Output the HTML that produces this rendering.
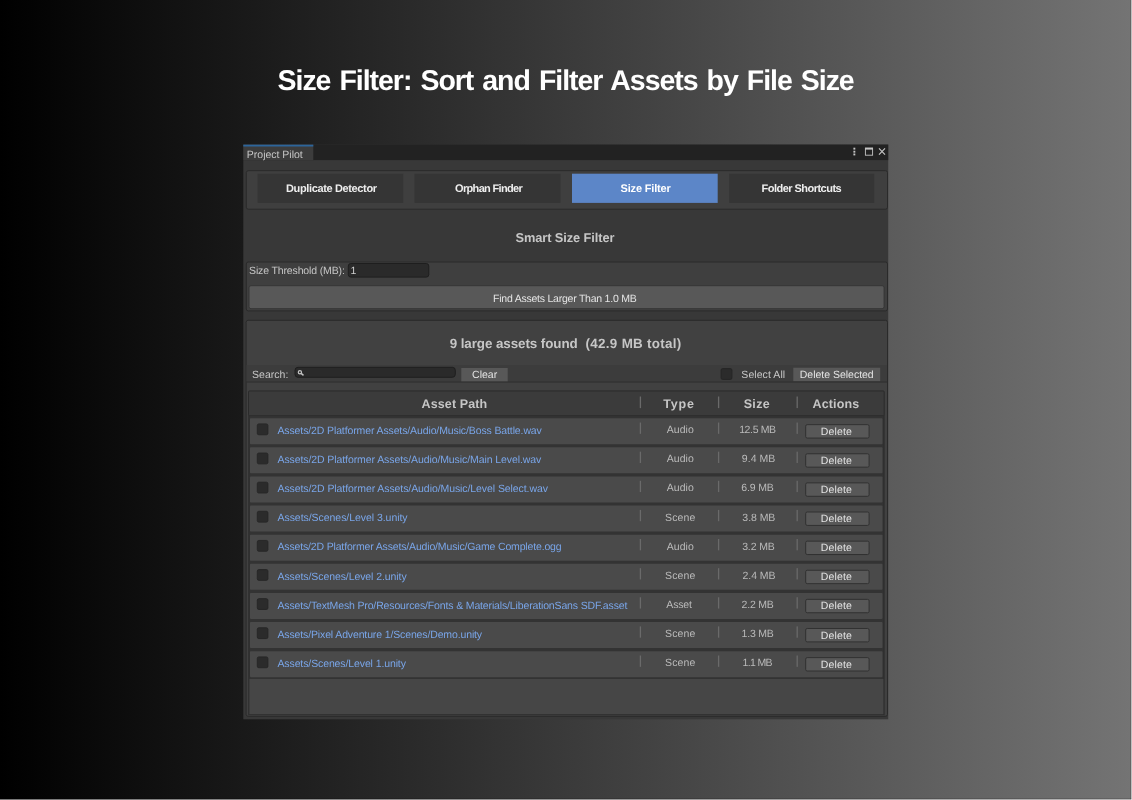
<!DOCTYPE html>
<html lang="en">
<head>
<meta charset="utf-8">
<title>Size Filter: Sort and Filter Assets by File Size</title>
<style>
*{box-sizing:border-box;margin:0;padding:0}
html,body{width:1132px;height:800px;overflow:hidden}
body{position:relative;background:linear-gradient(90deg,#000000 0%,#747474 100%);font-family:"Liberation Sans", sans-serif;color:#c6c6c6;text-rendering:geometricPrecision}
#shapes{position:absolute;left:0;top:0;width:1132px;height:800px}
#ui{position:absolute;left:0;top:0;width:1132px;height:800px;will-change:transform}
.t{position:absolute;white-space:nowrap;font-weight:400;text-decoration:none;display:block}
.pre{white-space:pre}
</style>
</head>
<body>
<svg id="shapes" width="1132" height="800" viewBox="0 0 1132 800" shape-rendering="geometricPrecision">
<rect x="243.30" y="144.60" width="644.90" height="574.70" fill="#383838"/>
<rect x="243.30" y="144.60" width="644.90" height="15.50" fill="#222222"/>
<rect x="243.30" y="144.60" width="70.00" height="15.50" fill="#3c3c3c"/>
<rect x="243.30" y="144.70" width="70.00" height="1.80" fill="#2c659b"/>
<rect x="246.30" y="170.70" width="641.20" height="38.50" fill="#3f3f3f" rx="2" stroke="#2a2a2a" stroke-width="1"/>
<rect x="257.60" y="173.70" width="145.70" height="29.20" fill="#353535"/>
<rect x="414.50" y="173.70" width="146.00" height="29.20" fill="#353535"/>
<rect x="572.00" y="173.70" width="145.70" height="29.20" fill="#5c86c8"/>
<rect x="729.20" y="173.70" width="145.00" height="29.20" fill="#353535"/>
<rect x="246.30" y="262.00" width="641.20" height="48.90" fill="#3f3f3f" rx="2" stroke="#2a2a2a" stroke-width="1"/>
<rect x="348.30" y="263.50" width="80.50" height="13.60" fill="#2a2a2a" rx="2.5" stroke="#1e1e1e" stroke-width="1"/>
<rect x="249.00" y="285.70" width="635.10" height="23.00" fill="#585858" rx="2" stroke="#353535" stroke-width="1"/>
<rect x="246.10" y="320.30" width="641.40" height="396.00" fill="#414141" rx="2" stroke="#2a2a2a" stroke-width="1"/>
<rect x="246.60" y="365.00" width="640.30" height="16.50" fill="#3c3c3c"/>
<rect x="246.60" y="381.50" width="640.30" height="1.00" fill="#2c2c2c"/>
<rect x="295.00" y="367.30" width="160.30" height="10.00" fill="#2a2a2a" rx="3" stroke="#1e1e1e" stroke-width="1"/>
<rect x="461.30" y="368.00" width="46.40" height="13.30" fill="#585858"/>
<rect x="721.10" y="368.60" width="10.80" height="10.80" fill="#2b2b2b" rx="1.5" stroke="#262626" stroke-width="1"/>
<rect x="793.30" y="367.70" width="86.90" height="13.40" fill="#585858"/>
<rect x="248.50" y="390.90" width="635.70" height="24.90" fill="#3b3b3b" rx="1" stroke="#2b2b2b" stroke-width="1"/>
<rect x="248.20" y="415.00" width="636.40" height="300.20" fill="#2e2e2e"/>
<rect x="249.40" y="678.76" width="634.00" height="35.44" fill="#464646"/>
<rect x="249.40" y="416.20" width="634.00" height="262.56" fill="#333333"/>
<rect x="250.00" y="418.25" width="632.50" height="25.95" fill="#4a4a4a" rx="0.8"/>
<rect x="257.30" y="423.95" width="10.60" height="10.80" fill="#2b2b2b" rx="1.5" stroke="#272727" stroke-width="1"/>
<rect x="639.75" y="422.55" width="1.30" height="11.30" fill="#6a6a6a"/>
<rect x="717.95" y="422.55" width="1.30" height="11.30" fill="#6a6a6a"/>
<rect x="796.55" y="422.55" width="1.30" height="11.30" fill="#6a6a6a"/>
<rect x="805.70" y="424.65" width="63.40" height="13.40" fill="#585858" rx="1.5" stroke="#313131" stroke-width="1"/>
<rect x="250.00" y="447.37" width="632.50" height="25.95" fill="#4a4a4a" rx="0.8"/>
<rect x="257.30" y="453.07" width="10.60" height="10.80" fill="#2b2b2b" rx="1.5" stroke="#272727" stroke-width="1"/>
<rect x="639.75" y="451.67" width="1.30" height="11.30" fill="#6a6a6a"/>
<rect x="717.95" y="451.67" width="1.30" height="11.30" fill="#6a6a6a"/>
<rect x="796.55" y="451.67" width="1.30" height="11.30" fill="#6a6a6a"/>
<rect x="805.70" y="453.77" width="63.40" height="13.40" fill="#585858" rx="1.5" stroke="#313131" stroke-width="1"/>
<rect x="250.00" y="476.49" width="632.50" height="25.95" fill="#4a4a4a" rx="0.8"/>
<rect x="257.30" y="482.19" width="10.60" height="10.80" fill="#2b2b2b" rx="1.5" stroke="#272727" stroke-width="1"/>
<rect x="639.75" y="480.79" width="1.30" height="11.30" fill="#6a6a6a"/>
<rect x="717.95" y="480.79" width="1.30" height="11.30" fill="#6a6a6a"/>
<rect x="796.55" y="480.79" width="1.30" height="11.30" fill="#6a6a6a"/>
<rect x="805.70" y="482.89" width="63.40" height="13.40" fill="#585858" rx="1.5" stroke="#313131" stroke-width="1"/>
<rect x="250.00" y="505.61" width="632.50" height="25.95" fill="#4a4a4a" rx="0.8"/>
<rect x="257.30" y="511.31" width="10.60" height="10.80" fill="#2b2b2b" rx="1.5" stroke="#272727" stroke-width="1"/>
<rect x="639.75" y="509.91" width="1.30" height="11.30" fill="#6a6a6a"/>
<rect x="717.95" y="509.91" width="1.30" height="11.30" fill="#6a6a6a"/>
<rect x="796.55" y="509.91" width="1.30" height="11.30" fill="#6a6a6a"/>
<rect x="805.70" y="512.01" width="63.40" height="13.40" fill="#585858" rx="1.5" stroke="#313131" stroke-width="1"/>
<rect x="250.00" y="534.73" width="632.50" height="25.95" fill="#4a4a4a" rx="0.8"/>
<rect x="257.30" y="540.43" width="10.60" height="10.80" fill="#2b2b2b" rx="1.5" stroke="#272727" stroke-width="1"/>
<rect x="639.75" y="539.03" width="1.30" height="11.30" fill="#6a6a6a"/>
<rect x="717.95" y="539.03" width="1.30" height="11.30" fill="#6a6a6a"/>
<rect x="796.55" y="539.03" width="1.30" height="11.30" fill="#6a6a6a"/>
<rect x="805.70" y="541.13" width="63.40" height="13.40" fill="#585858" rx="1.5" stroke="#313131" stroke-width="1"/>
<rect x="250.00" y="563.85" width="632.50" height="25.95" fill="#4a4a4a" rx="0.8"/>
<rect x="257.30" y="569.55" width="10.60" height="10.80" fill="#2b2b2b" rx="1.5" stroke="#272727" stroke-width="1"/>
<rect x="639.75" y="568.15" width="1.30" height="11.30" fill="#6a6a6a"/>
<rect x="717.95" y="568.15" width="1.30" height="11.30" fill="#6a6a6a"/>
<rect x="796.55" y="568.15" width="1.30" height="11.30" fill="#6a6a6a"/>
<rect x="805.70" y="570.25" width="63.40" height="13.40" fill="#585858" rx="1.5" stroke="#313131" stroke-width="1"/>
<rect x="250.00" y="592.97" width="632.50" height="25.95" fill="#4a4a4a" rx="0.8"/>
<rect x="257.30" y="598.67" width="10.60" height="10.80" fill="#2b2b2b" rx="1.5" stroke="#272727" stroke-width="1"/>
<rect x="639.75" y="597.27" width="1.30" height="11.30" fill="#6a6a6a"/>
<rect x="717.95" y="597.27" width="1.30" height="11.30" fill="#6a6a6a"/>
<rect x="796.55" y="597.27" width="1.30" height="11.30" fill="#6a6a6a"/>
<rect x="805.70" y="599.37" width="63.40" height="13.40" fill="#585858" rx="1.5" stroke="#313131" stroke-width="1"/>
<rect x="250.00" y="622.09" width="632.50" height="25.95" fill="#4a4a4a" rx="0.8"/>
<rect x="257.30" y="627.79" width="10.60" height="10.80" fill="#2b2b2b" rx="1.5" stroke="#272727" stroke-width="1"/>
<rect x="639.75" y="626.39" width="1.30" height="11.30" fill="#6a6a6a"/>
<rect x="717.95" y="626.39" width="1.30" height="11.30" fill="#6a6a6a"/>
<rect x="796.55" y="626.39" width="1.30" height="11.30" fill="#6a6a6a"/>
<rect x="805.70" y="628.49" width="63.40" height="13.40" fill="#585858" rx="1.5" stroke="#313131" stroke-width="1"/>
<rect x="250.00" y="651.21" width="632.50" height="25.95" fill="#4a4a4a" rx="0.8"/>
<rect x="257.30" y="656.91" width="10.60" height="10.80" fill="#2b2b2b" rx="1.5" stroke="#272727" stroke-width="1"/>
<rect x="639.75" y="655.51" width="1.30" height="11.30" fill="#6a6a6a"/>
<rect x="717.95" y="655.51" width="1.30" height="11.30" fill="#6a6a6a"/>
<rect x="796.55" y="655.51" width="1.30" height="11.30" fill="#6a6a6a"/>
<rect x="805.70" y="657.61" width="63.40" height="13.40" fill="#585858" rx="1.5" stroke="#313131" stroke-width="1"/>
<rect x="639.75" y="396.50" width="1.30" height="11.60" fill="#6a6a6a"/>
<rect x="717.95" y="396.50" width="1.30" height="11.60" fill="#6a6a6a"/>
<rect x="796.55" y="396.50" width="1.30" height="11.60" fill="#6a6a6a"/>
<g fill="#c6c6c6"><rect x="853.4" y="147.7" width="1.9" height="1.9"/><rect x="853.4" y="150.75" width="1.9" height="1.9"/><rect x="853.4" y="153.5" width="1.9" height="1.9"/></g>
<rect x="865.4" y="148.2" width="7.2" height="7" fill="none" stroke="#c4c4c4" stroke-width="0.9"/><rect x="865" y="147.7" width="8" height="1.9" fill="#c4c4c4"/>
<path d="M879 148.4 L885 154.6 M885 148.4 L879 154.6" stroke="#c8c8c8" stroke-width="1.15" fill="none"/>
<circle cx="299.9" cy="372.2" r="1.6" fill="none" stroke="#c4c4c4" stroke-width="1.25"/><path d="M301.1 373.4 L303.5 375.4" stroke="#c4c4c4" stroke-width="1.4" fill="none"/>
<rect x="0" y="798" width="1132" height="1" fill="#000" fill-opacity="0.13"/><rect x="1130" y="0" width="1" height="800" fill="#000" fill-opacity="0.12"/><rect x="0" y="799" width="1132" height="1" fill="#fff" fill-opacity="0.47"/><rect x="1131" y="0" width="1" height="800" fill="#fff" fill-opacity="0.55"/>
</svg>
<div id="ui">
<h1 class="t" id="title" style="font-size:28.5px;line-height:37px;color:#ffffff;font-weight:700;word-spacing:2.2px;letter-spacing:-1.046px;left:277.59px;top:63.30px;">Size Filter: Sort and Filter Assets by File Size</h1>
<div class="t" id="tabname" style="font-size:10.5px;line-height:14px;color:#c6c6c6;letter-spacing:-0.014px;left:246.87px;top:147.70px;">Project Pilot</div>
<div class="t" id="tb1" style="font-size:11px;line-height:14px;color:#eeeeee;font-weight:700;letter-spacing:-0.358px;left:285.94px;top:181.70px;">Duplicate Detector</div>
<div class="t" id="tb2" style="font-size:11px;line-height:14px;color:#eeeeee;font-weight:700;letter-spacing:-0.663px;left:455.04px;top:181.70px;">Orphan Finder</div>
<div class="t" id="tb3" style="font-size:11px;line-height:14px;color:#ffffff;font-weight:700;letter-spacing:-0.165px;left:620.54px;top:181.70px;">Size Filter</div>
<div class="t" id="tb4" style="font-size:11px;line-height:14px;color:#eeeeee;font-weight:700;letter-spacing:-0.526px;left:761.54px;top:181.70px;">Folder Shortcuts</div>
<h2 class="t" id="smart" style="font-size:12.8px;line-height:17px;color:#c6c6c6;font-weight:700;letter-spacing:-0.072px;left:515.43px;top:229.20px;">Smart Size Filter</h2>
<div class="t" id="thrlbl" style="font-size:10.5px;line-height:14px;color:#c6c6c6;letter-spacing:-0.141px;left:249.07px;top:264.10px;">Size Threshold (MB):</div>
<div class="t" id="thrval" style="font-size:10.5px;line-height:14px;color:#d0d0d0;left:350.57px;top:264.30px;">1</div>
<div class="t" id="findbtn" style="font-size:10.5px;line-height:14px;color:#e4e4e4;letter-spacing:-0.232px;left:493.07px;top:291.70px;">Find Assets Larger Than 1.0 MB</div>
<h3 class="t" id="found" style="font-size:13.4px;line-height:17px;color:#c6c6c6;font-weight:700;letter-spacing:-0.079px;left:449.70px;top:334.80px;">9 large assets found</h3>
<h3 class="t" id="total" style="font-size:13.4px;line-height:17px;color:#c6c6c6;font-weight:700;letter-spacing:0.299px;left:585.60px;top:334.80px;">(42.9 MB total)</h3>
<div class="t" id="searchlbl" style="font-size:10.5px;line-height:14px;color:#c6c6c6;letter-spacing:0.012px;left:252.07px;top:367.50px;">Search:</div>
<div class="t" id="clearbtn" style="font-size:10.5px;line-height:14px;color:#e4e4e4;letter-spacing:0.017px;left:472.07px;top:368.30px;">Clear</div>
<div class="t" id="selall" style="font-size:10.5px;line-height:14px;color:#c6c6c6;letter-spacing:0.062px;left:741.37px;top:367.60px;">Select All</div>
<div class="t" id="delsel" style="font-size:10.5px;line-height:14px;color:#e4e4e4;letter-spacing:-0.013px;left:799.77px;top:368.00px;">Delete Selected</div>
<div class="t" id="h_path" style="font-size:12.5px;line-height:16px;color:#c6c6c6;font-weight:700;letter-spacing:0.121px;left:421.55px;top:396.30px;">Asset Path</div>
<div class="t" id="h_type" style="font-size:12.5px;line-height:16px;color:#c6c6c6;font-weight:700;letter-spacing:0.817px;left:663.25px;top:396.30px;">Type</div>
<div class="t" id="h_size" style="font-size:12.5px;line-height:16px;color:#c6c6c6;font-weight:700;letter-spacing:0.361px;left:743.65px;top:396.30px;">Size</div>
<div class="t" id="h_act" style="font-size:12.5px;line-height:16px;color:#c6c6c6;font-weight:700;letter-spacing:0.143px;left:812.55px;top:396.30px;">Actions</div>
<a class="t" id="p0" style="font-size:10.5px;line-height:14px;color:#79a5e8;letter-spacing:-0.119px;left:277.47px;top:423.95px;">Assets/2D Platformer Assets/Audio/Music/Boss Battle.wav</a>
<div class="t" id="ty0" style="font-size:10.5px;line-height:14px;color:#bababa;letter-spacing:0.050px;left:666.77px;top:423.20px;">Audio</div>
<div class="t" id="sz0" style="font-size:10.5px;line-height:14px;color:#bababa;letter-spacing:-0.375px;left:739.17px;top:423.20px;">12.5 MB</div>
<div class="t" id="del0" style="font-size:10.5px;line-height:14px;color:#e4e4e4;letter-spacing:0.160px;left:820.72px;top:424.75px;">Delete</div>
<a class="t" id="p1" style="font-size:10.5px;line-height:14px;color:#79a5e8;letter-spacing:-0.088px;left:277.47px;top:453.07px;">Assets/2D Platformer Assets/Audio/Music/Main Level.wav</a>
<div class="t" id="ty1" style="font-size:10.5px;line-height:14px;color:#bababa;letter-spacing:0.050px;left:666.77px;top:452.32px;">Audio</div>
<div class="t" id="sz1" style="font-size:10.5px;line-height:14px;color:#bababa;letter-spacing:0.039px;left:741.87px;top:452.32px;">9.4 MB</div>
<div class="t" id="del1" style="font-size:10.5px;line-height:14px;color:#e4e4e4;letter-spacing:0.160px;left:820.72px;top:453.87px;">Delete</div>
<a class="t" id="p2" style="font-size:10.5px;line-height:14px;color:#79a5e8;letter-spacing:-0.080px;left:277.47px;top:482.19px;">Assets/2D Platformer Assets/Audio/Music/Level Select.wav</a>
<div class="t" id="ty2" style="font-size:10.5px;line-height:14px;color:#bababa;letter-spacing:0.050px;left:666.77px;top:481.44px;">Audio</div>
<div class="t" id="sz2" style="font-size:10.5px;line-height:14px;color:#bababa;letter-spacing:-0.161px;left:741.27px;top:481.44px;">6.9 MB</div>
<div class="t" id="del2" style="font-size:10.5px;line-height:14px;color:#e4e4e4;letter-spacing:0.160px;left:820.72px;top:482.99px;">Delete</div>
<a class="t" id="p3" style="font-size:10.5px;line-height:14px;color:#79a5e8;letter-spacing:-0.045px;left:277.47px;top:511.31px;">Assets/Scenes/Level 3.unity</a>
<div class="t" id="ty3" style="font-size:10.5px;line-height:14px;color:#bababa;letter-spacing:0.170px;left:664.97px;top:510.56px;">Scene</div>
<div class="t" id="sz3" style="font-size:10.5px;line-height:14px;color:#bababa;letter-spacing:-0.061px;left:742.37px;top:510.56px;">3.8 MB</div>
<div class="t" id="del3" style="font-size:10.5px;line-height:14px;color:#e4e4e4;letter-spacing:0.160px;left:820.72px;top:512.11px;">Delete</div>
<a class="t" id="p4" style="font-size:10.5px;line-height:14px;color:#79a5e8;letter-spacing:-0.157px;left:277.47px;top:540.43px;">Assets/2D Platformer Assets/Audio/Music/Game Complete.ogg</a>
<div class="t" id="ty4" style="font-size:10.5px;line-height:14px;color:#bababa;letter-spacing:0.050px;left:666.77px;top:539.68px;">Audio</div>
<div class="t" id="sz4" style="font-size:10.5px;line-height:14px;color:#bababa;letter-spacing:-0.121px;left:742.17px;top:539.68px;">3.2 MB</div>
<div class="t" id="del4" style="font-size:10.5px;line-height:14px;color:#e4e4e4;letter-spacing:0.160px;left:820.72px;top:541.23px;">Delete</div>
<a class="t" id="p5" style="font-size:10.5px;line-height:14px;color:#79a5e8;letter-spacing:-0.083px;left:277.47px;top:569.55px;">Assets/Scenes/Level 2.unity</a>
<div class="t" id="ty5" style="font-size:10.5px;line-height:14px;color:#bababa;letter-spacing:0.170px;left:664.97px;top:568.80px;">Scene</div>
<div class="t" id="sz5" style="font-size:10.5px;line-height:14px;color:#bababa;letter-spacing:-0.041px;left:742.47px;top:568.80px;">2.4 MB</div>
<div class="t" id="del5" style="font-size:10.5px;line-height:14px;color:#e4e4e4;letter-spacing:0.160px;left:820.72px;top:570.35px;">Delete</div>
<a class="t" id="p6" style="font-size:10.5px;line-height:14px;color:#79a5e8;letter-spacing:-0.143px;left:277.47px;top:598.67px;">Assets/TextMesh Pro/Resources/Fonts &amp; Materials/LiberationSans SDF.asset</a>
<div class="t" id="ty6" style="font-size:10.5px;line-height:14px;color:#bababa;letter-spacing:-0.201px;left:666.37px;top:597.92px;">Asset</div>
<div class="t" id="sz6" style="font-size:10.5px;line-height:14px;color:#bababa;letter-spacing:-0.221px;left:741.57px;top:597.92px;">2.2 MB</div>
<div class="t" id="del6" style="font-size:10.5px;line-height:14px;color:#e4e4e4;letter-spacing:0.160px;left:820.72px;top:599.47px;">Delete</div>
<a class="t" id="p7" style="font-size:10.5px;line-height:14px;color:#79a5e8;letter-spacing:-0.133px;left:277.47px;top:627.79px;">Assets/Pixel Adventure 1/Scenes/Demo.unity</a>
<div class="t" id="ty7" style="font-size:10.5px;line-height:14px;color:#bababa;letter-spacing:0.170px;left:664.97px;top:627.04px;">Scene</div>
<div class="t" id="sz7" style="font-size:10.5px;line-height:14px;color:#bababa;letter-spacing:-0.221px;left:741.57px;top:627.04px;">1.3 MB</div>
<div class="t" id="del7" style="font-size:10.5px;line-height:14px;color:#e4e4e4;letter-spacing:0.160px;left:820.72px;top:628.59px;">Delete</div>
<a class="t" id="p8" style="font-size:10.5px;line-height:14px;color:#79a5e8;letter-spacing:-0.110px;left:277.47px;top:656.91px;">Assets/Scenes/Level 1.unity</a>
<div class="t" id="ty8" style="font-size:10.5px;line-height:14px;color:#bababa;letter-spacing:0.170px;left:664.97px;top:656.16px;">Scene</div>
<div class="t" id="sz8" style="font-size:10.5px;line-height:14px;color:#bababa;letter-spacing:-0.621px;left:742.47px;top:656.16px;">1.1 MB</div>
<div class="t" id="del8" style="font-size:10.5px;line-height:14px;color:#e4e4e4;letter-spacing:0.160px;left:820.72px;top:657.71px;">Delete</div>
</div>
</body>
</html>
